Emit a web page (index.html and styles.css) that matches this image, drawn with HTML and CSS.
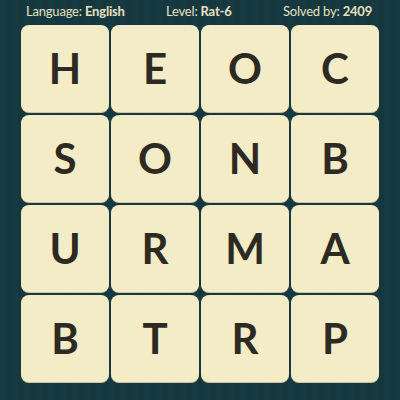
FILE: index.html
```html
<!DOCTYPE html>
<html>
<head>
<meta charset="utf-8">
<link rel="stylesheet" href="styles.css">
</head>
<body>
<div class="page">
  <div class="header">
    <span class="item lang">Language: <b>English</b></span>
    <span class="item level">Level: <b>Rat-6</b></span>
    <span class="item solved">Solved by: <b>2409</b></span>
  </div>
  <div class="grid">
    <div class="tile">H</div><div class="tile">E</div><div class="tile">O</div><div class="tile">C</div>
    <div class="tile">S</div><div class="tile">O</div><div class="tile">N</div><div class="tile">B</div>
    <div class="tile">U</div><div class="tile">R</div><div class="tile">M</div><div class="tile">A</div>
    <div class="tile">B</div><div class="tile">T</div><div class="tile">R</div><div class="tile">P</div>
  </div>
</div>
</body>
</html>
```
FILE: styles.css
```css
html, body {
  margin: 0;
  padding: 0;
}
body {
  width: 400px;
  height: 400px;
  overflow: hidden;
  background-color: #163a41;
  background-image: repeating-linear-gradient(90deg, #163a41 0px, #163a41 6px, #15373d 6px, #15373d 12px);
  font-family: Lato, "Open Sans", sans-serif;
}
.page {
  width: 400px;
  height: 400px;
}
.header {
  height: 25px;
  position: relative;
  color: #e6e1c0;
  font-size: 13px;
  letter-spacing: -0.2px;
}
.item {
  position: absolute;
  top: 3px;
  white-space: nowrap;
}
.item b {
  font-weight: 700;
}
.lang { left: 26px; }
.level { left: 166px; }
.solved { left: 283px; }
.grid {
  margin-left: 21px;
  display: grid;
  grid-template-columns: repeat(4, 88px);
  grid-template-rows: repeat(4, 87px);
  column-gap: 2px;
  row-gap: 3px;
}
.tile {
  background: #f3ecc6;
  border-radius: 8px;
  box-shadow: 0 1px 0 #cfc7a0;
  display: flex;
  align-items: center;
  justify-content: center;
  color: #2d2923;
  font-size: 42px;
  font-weight: 700;
  line-height: 1;
  padding-bottom: 1px;
}
```
